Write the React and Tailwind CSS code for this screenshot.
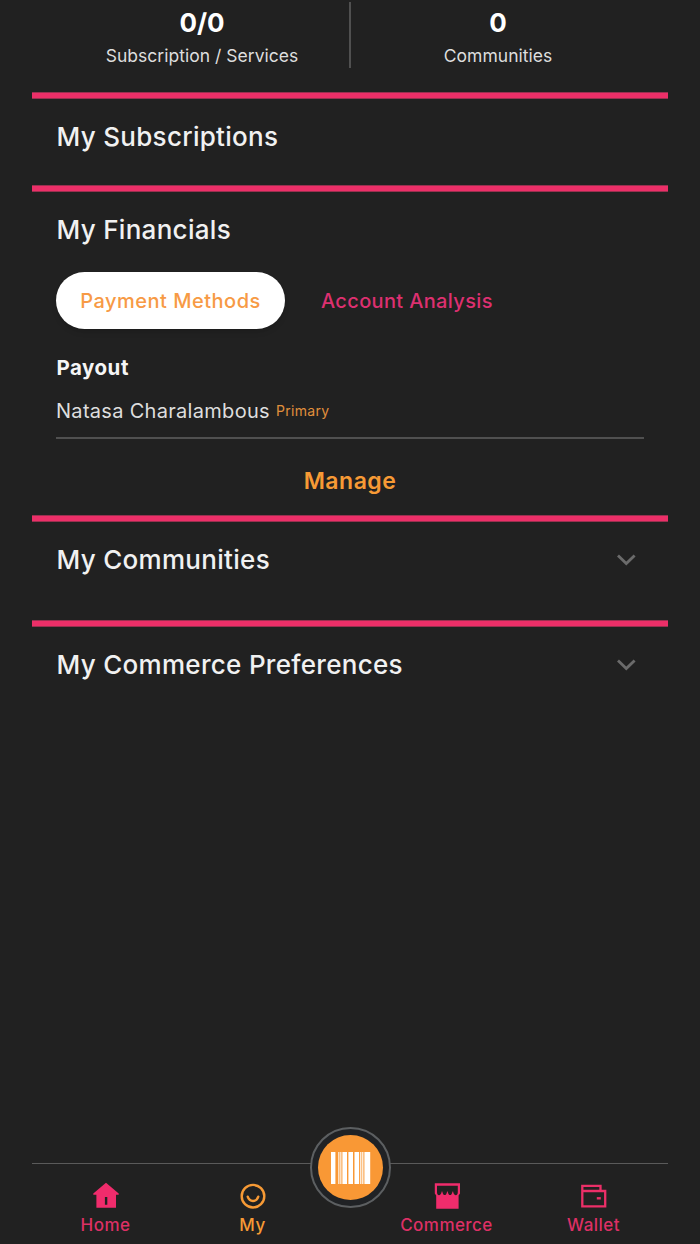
import React from "react";

function Bar() {
  return <div className="h-[7px] w-full border-y border-[#99304f] bg-[#ec2f68]" />;
}

function Stat({ value, label }) {
  return (
    <div className="flex w-[294px] flex-col items-center">
      <div className="h-[46px] text-[26px] leading-[46px] font-bold text-white">{value}</div>
      <div className="h-5 text-[17.5px] leading-5 tracking-[0.02px] whitespace-nowrap text-[#dedede]">{label}</div>
    </div>
  );
}

function Title({ children, chevron }) {
  return (
    <div className="flex h-[76px] items-center justify-between pr-2 pl-[0.5px]">
      <h2 className="text-[26px] leading-8 font-medium tracking-[0.3px] text-[#f1f1f1]">{children}</h2>
      {chevron && (
        <svg className="h-3 w-5" viewBox="0 0 20 12" fill="none" stroke="#6b6b6b" strokeWidth="2.8">
          <path d="M2 1.5 10.3 9.5 18.6 1.5" />
        </svg>
      )}
    </div>
  );
}

function HomeIcon() {
  return (
    <svg className="h-7 w-7" viewBox="0 0 28 28" fill="#f02c6c">
      <path fillRule="evenodd" d="M14 1.8 26.7 12.6V13.8H24V26.7H4.4V13.8H1.3V12.6ZM12.9 16V23.8H15.3V16Z" />
    </svg>
  );
}

function SmileIcon() {
  return (
    <svg className="h-7 w-7" viewBox="0 0 28 28" fill="none" stroke="#f79a35" strokeWidth="2.4">
      <circle cx="14" cy="15.2" r="11.3" />
      <path d="M8.7 15.7C10.5 21.4 17.5 21.4 19.3 15.7" strokeLinecap="round" />
    </svg>
  );
}

function ShopIcon() {
  return (
    <svg className="h-7 w-7" viewBox="0 0 28 28" fill="#f02c6c">
      <path
        fillRule="evenodd"
        d="M1.8 2.3H27V12.4L25.6 14.5V27.8H3.2V14.5L1.8 12.4ZM4 4.8V11.2C4 15.3 8 15.3 8.7 10.4H9.3C10 15.3 13.4 15.3 14.1 10.4H14.7C15.4 15.3 18.8 15.3 19.5 10.4H20.1C20.8 15.3 24.8 15.3 24.8 11.2V4.8Z"
      />
    </svg>
  );
}

function WalletIcon() {
  return (
    <svg className="h-7 w-7" viewBox="0 0 28 28" fill="none" stroke="#ec2f68" strokeWidth="2.3">
      <path d="M2.3 10V4.8H20.5V10M2.3 10H25.2V25.3H2.3Z" />
      <rect x="16.8" y="16.1" width="4" height="2.4" fill="#ec2f68" stroke="none" />
    </svg>
  );
}

function NavItem({ icon, label, active }) {
  return (
    <div className={`flex w-[147px] flex-col items-center ${active ? "text-[#f79a35]" : "text-[#dd3065]"}`}>
      {icon}
      <span className="mt-1 text-[17px] leading-6 font-medium tracking-[0.45px]">{label}</span>
    </div>
  );
}

export default function App() {
  return (
    <div className="flex h-[1244px] w-[700px] flex-col overflow-hidden bg-[#212121] px-8 font-['Inter',sans-serif]">
      <header className="flex h-[92px] justify-center">
        <Stat value="0/0" label="Subscription / Services" />
        <div className="mt-0.5 h-[66px] w-0.5 bg-[#505050]" />
        <Stat value="0" label="Communities" />
      </header>

      <main className="flex flex-col">
        <Bar />
        <section className="h-[86px] px-6">
          <Title>My Subscriptions</Title>
        </section>
        <Bar />
        <section className="h-[323px] px-6">
          <Title>My Financials</Title>
          <div className="mt-[4px] flex h-[57px] items-center">
            <button className="flex h-[57px] w-[229px] items-center justify-center rounded-full bg-white text-[20px] font-medium tracking-[0.5px] whitespace-nowrap text-[#f79a45] shadow-md">
              Payment Methods
            </button>
            <button className="ml-9 text-[20px] font-medium tracking-[0.35px] whitespace-nowrap text-[#dd3070]">
              Account Analysis
            </button>
          </div>
          <h3 className="mt-6 pl-[0.5px] text-[20.5px] leading-[30px] font-bold tracking-[0.5px] text-[#f5f5f5]">Payout</h3>
          <div className="mt-3 flex h-11 items-start border-b-2 border-[#505050] whitespace-nowrap">
            <span className="text-[20px] leading-8 tracking-[0.3px] text-[#dedede]">Natasa Charalambous</span>
            <span className="ml-[6px] text-[14px] leading-8 tracking-[0.3px] text-[#e08f3c]">Primary</span>
          </div>
          <button className="mt-[22px] block w-full text-center text-[23px] leading-10 font-semibold tracking-[0.5px] text-[#f79a35]">
            Manage
          </button>
        </section>
        <Bar />
        <section className="h-[98px] px-6">
          <Title chevron>My Communities</Title>
        </section>
        <Bar />
        <section className="px-6">
          <Title chevron>My Commerce Preferences</Title>
        </section>
      </main>

      <nav className="relative mt-auto flex h-[81px] justify-between border-t border-[#5a5a5a] pt-[17px]">
        <div className="flex">
          <NavItem icon={<HomeIcon />} label="Home" />
          <NavItem icon={<SmileIcon />} label="My" active />
        </div>
        <div className="mr-px flex">
          <NavItem icon={<ShopIcon />} label="Commerce" />
          <NavItem icon={<WalletIcon />} label="Wallet" />
        </div>
        <div className="absolute -top-[37px] left-[278px] flex h-[81px] w-[81px] items-center justify-center rounded-full border-2 border-[#5c5f61] bg-[#202225]">
          <div className="flex h-[65px] w-[65px] items-center justify-center rounded-full bg-[#f99835]">
            <svg className="h-8 w-10" viewBox="0 0 40 32" fill="#fff">
              <rect x="0" width="4.4" height="32" />
              <rect x="7.3" width="1.1" height="32" />
              <rect x="9.3" width="1.1" height="32" />
              <rect x="11.4" width="4.6" height="32" />
              <rect x="17.4" width="4.6" height="32" />
              <rect x="23.5" width="4.6" height="32" />
              <rect x="29.2" width="1.2" height="32" />
              <rect x="31.2" width="1.2" height="32" />
              <rect x="33.4" width="5.8" height="32" />
            </svg>
          </div>
        </div>
      </nav>
    </div>
  );
}
